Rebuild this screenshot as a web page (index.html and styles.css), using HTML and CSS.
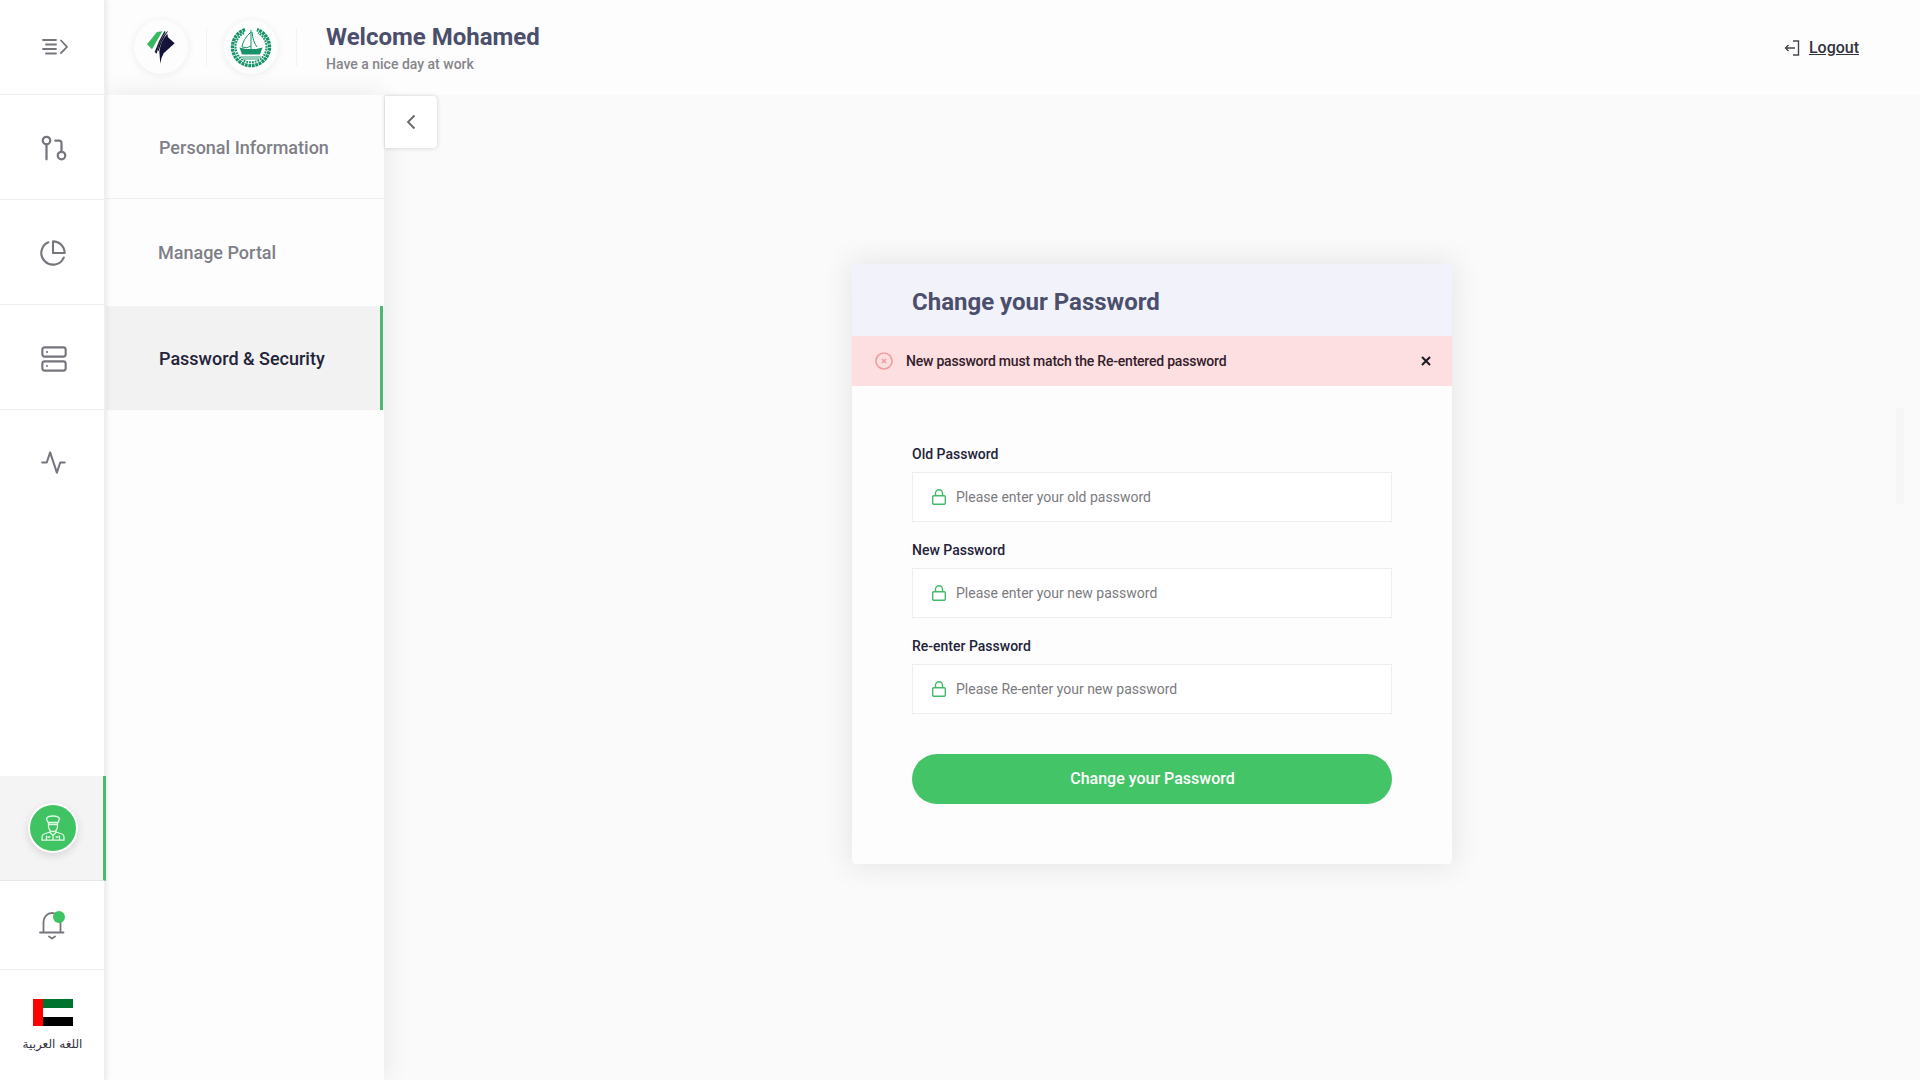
FILE: index.html
```html
<!DOCTYPE html>
<html lang="en">
<head>
<meta charset="utf-8">
<title>Password &amp; Security</title>
<link rel="stylesheet" href="styles.css">
</head>
<body>
<div class="app">
  <nav class="rail">
    <a class="rail-toggle">
      <svg width="28" height="20" viewBox="0 0 28 20"><path d="M1 3h13M4 7.500h10M1 12h13M4 16.500h10M19 3.500l6 6.300-6 6.200"/></svg>
    </a>
    <a class="rail-item">
      <svg width="30" height="30" viewBox="0 0 24 24"><circle cx="18" cy="18" r="3"/><circle cx="6" cy="6" r="3"/><path d="M13 6h3a2 2 0 0 1 2 2v7M6 9v12"/></svg>
    </a>
    <a class="rail-item rail-chart">
      <svg width="28" height="28" viewBox="0 0 24 24"><path d="M21.200 15.900A10 10 0 1 1 8 2.800"/><path d="M22 12A10 10 0 0 0 12 2v10z"/></svg>
    </a>
    <a class="rail-item">
      <svg width="28" height="28" viewBox="0 0 24 24"><rect x="2" y="2" width="20" height="8" rx="2"/><rect x="2" y="14" width="20" height="8" rx="2"/><path d="M6 6h.01M6 18h.01"/></svg>
    </a>
    <a class="rail-item rail-last">
      <svg width="27" height="27" viewBox="0 0 24 24"><path d="M22 12h-4l-3 9L9 3l-3 9H2"/></svg>
    </a>
    <div class="rail-space"></div>
    <a class="rail-item rail-active">
      <span class="avatar">
        <svg width="24" height="26" viewBox="0 0 24 26"><path d="M5.500 4Q6 1 12 1t6.500 3L17 7.500H7zM7.500 7.500v4q.5 5 4.500 5t4.500-5v-4M7.500 9.500h9M9 15.500v2l3 3 3-3v-2M9 17l-6 2q-2 .8-2 3v3.200h22V22q0-2.200-2-3l-6-2M12 20.500v4.500M5.500 21v4M18.500 21v4M15 22h2M7 22h2"/></svg>
      </span>
    </a>
    <a class="rail-bell">
      <svg width="28" height="30" viewBox="0 0 28 30"><path d="M2 22.500h23.500M5.500 22V12a8.500 9 0 0 1 17 0v10M11 26.500l3 2 3-2"/><circle class="bell-dot" cx="21" cy="7" r="6"/></svg>
    </a>
    <a class="rail-lang">
      <svg width="40" height="27" viewBox="0 0 40 27"><path fill="#fff" d="M0 0h40v27H0z"/><path fill="#00732f" d="M10 0h30v9H10z"/><path fill="#000" d="M10 18h30v9H10z"/><path fill="#f00" d="M0 0h10v27H0z"/></svg>
      <span lang="ar" dir="rtl">اللغه العربية</span>
    </a>
  </nav>

  <div class="body">
    <header class="topbar">
      <span class="logo">
        <svg width="28" height="34" viewBox="67 47 84 102"><path fill="#35b95c" d="M97 53l16-2-31 54-15-15z"/><path fill="#1b1b3a" d="M119 51q-17 28-29 62l6 5q8-36 27-66z"/><path fill="#14143a" d="M128 50q-21 22-29 58l3 3q8-32 27-59z"/><path fill="#14143a" d="M128 58q-20 22-24 54l3 36q2-18 10-31l33-30-20-18z"/></svg>
      </span>
      <i class="divider"></i>
      <span class="logo">
        <svg width="42" height="42" viewBox="0 0 42 42" fill="none" stroke="#16936a"><path stroke-width="3.400" stroke-dasharray="2.800 .7" d="M15 3.600A18.500 18.500 0 1 0 27 3.600"/><path stroke-width="2" stroke-dasharray="1.800 1" d="M14 7A15.500 15.500 0 1 0 28 7"/><path stroke-width="1" d="M21 4v19M21 6q-8 7-9 15 5 2 9-1M22 6q1 10 5 15"/><path fill="#16936a" stroke="none" d="M9.500 21.500l6.500 1.500h10l6.500-1.500L30 28.500H12z"/><path stroke-width=".9" d="M11 31h20M13 33h16"/></svg>
      </span>
      <i class="divider"></i>
      <div class="greeting">
        <h1>Welcome Mohamed</h1>
        <p>Have a nice day at work</p>
      </div>
      <a class="logout">
        <svg width="16" height="18" viewBox="0 0 16 18"><path d="M9 2h5.500v14H9M11 9H1.500M4.500 6l-3 3 3 3"/></svg>
        <span>Logout</span>
      </a>
    </header>

    <div class="content">
      <aside class="subnav">
        <a class="sub-item">Personal Information</a>
        <a class="sub-item sub-second">Manage Portal</a>
        <a class="sub-item sub-active">Password &amp; Security</a>
      </aside>
      <main class="stage">
        <button class="collapse"><svg width="12" height="16" viewBox="0 0 12 16"><path d="M9.500 1.500L3 8l6.500 6.500"/></svg></button>
        <form class="card">
          <h2 class="card-head">Change your Password</h2>
          <div class="alert">
            <svg class="alert-icon" width="18" height="18" viewBox="0 0 18 18"><circle cx="9" cy="9" r="8"/><path d="M7 7l4 4M11 7l-4 4"/></svg>
            <span class="alert-text">New password must match the Re-entered password</span>
            <svg class="alert-close" width="10" height="10" viewBox="0 0 10 10"><path d="M1 1l8 8M9 1L1 9"/></svg>
          </div>
          <div class="fields">
            <label class="field">Old Password
              <span class="input"><svg width="14" height="16" viewBox="0 0 14 16"><rect x=".7" y="6.700" width="12.600" height="8.600" rx="1"/><path d="M3.500 6.700V4.200a3.500 3.500 0 0 1 7 0v2.500"/></svg>Please enter your old password</span></label>
            <label class="field">New Password
              <span class="input"><svg width="14" height="16" viewBox="0 0 14 16"><rect x=".7" y="6.700" width="12.600" height="8.600" rx="1"/><path d="M3.500 6.700V4.200a3.500 3.500 0 0 1 7 0v2.500"/></svg>Please enter your new password</span></label>
            <label class="field">Re-enter Password
              <span class="input"><svg width="14" height="16" viewBox="0 0 14 16"><rect x=".7" y="6.700" width="12.600" height="8.600" rx="1"/><path d="M3.500 6.700V4.200a3.500 3.500 0 0 1 7 0v2.500"/></svg>Please Re-enter your new password</span></label>
            <button class="submit" type="button">Change your Password</button>
          </div>
        </form>
        <i class="scroll-thumb"></i>
      </main>
    </div>
  </div>
</div>
</body>
</html>
```
FILE: styles.css
```css
* { box-sizing: border-box; }
body { margin: 0; background: #fafafa; color: #23233a; font-family: Roboto, "Liberation Sans", sans-serif; font-size: 14px; }
h1, h2, p { margin: 0; }
svg { display: block; flex: none; }
button { font: inherit; border: 0; padding: 0; }

.app { display: flex; width: 1920px; height: 1080px; overflow: hidden; }

.rail { position: relative; z-index: 3; flex: none; width: 106px; display: flex; flex-direction: column; background: #fff; border-right: 2px solid #efefef; box-shadow: 0 0 6px rgba(0, 0, 0, .1); }
.rail svg { fill: none; stroke: #75757d; stroke-width: 1.800; stroke-linecap: round; stroke-linejoin: round; }
.rail-toggle { height: 95px; display: flex; align-items: center; justify-content: center; padding: 0 0 0 8px; border-bottom: 1px solid #f1f1f1; }
.rail-item { height: 105px; display: flex; align-items: center; justify-content: center; padding: 1px 0 0 3px; border-bottom: 1px solid #efefef; }
.rail-item + .rail-item { padding-top: 3px; }
.rail-item.rail-chart { padding: 2px 0 0 1px; }
.rail-item.rail-last { height: 103px; padding-top: 1px; border: 0; }
.rail-space { flex: 1; }
.rail-item.rail-active { height: 105px; margin-right: -2px; padding: 0 0 0 2px; background: #f4f4f4; border-right: 3px solid #4cb873; border-bottom: 1px solid #e8e8e8; }
.avatar { width: 50px; height: 50px; display: flex; align-items: center; justify-content: center; border: 2px solid #fff; border-radius: 50%; background: #40c463; box-shadow: 0 3px 8px rgba(0, 0, 0, .12); }
.rail-active svg { stroke: #dff7e5; stroke-width: 1.300; }
.rail-bell { height: 89px; display: flex; align-items: center; justify-content: center; border-bottom: 1px solid #efefef; }
.rail .bell-dot { fill: #40c463; stroke: none; }
.rail-lang { height: 110px; padding: 29px 0 0 1px; display: flex; flex-direction: column; align-items: center; gap: 9px; color: #33333f; font: 12px/18px "DejaVu Sans", sans-serif; }
.rail-lang svg { stroke: none; }

.body { flex: 1; display: flex; flex-direction: column; }
.topbar { flex: none; height: 95px; display: flex; align-items: center; padding: 0 61px 1px 28px; background: #fdfdfd; }
.logo { width: 54px; height: 54px; display: flex; align-items: center; justify-content: center; border-radius: 50%; background: #fdfdfd; box-shadow: 0 1px 8px rgba(0, 0, 0, .07); }
.divider { width: 1px; height: 38px; margin: 0 17px 0 18px; background: #f3f3f3; }
.greeting { margin-left: 12px; }
.greeting h1 { padding-top: 1px; font-size: 24px; line-height: 30px; font-weight: 700; color: #4b4f6b; }
.greeting p { font-size: 14px; line-height: 18px; margin-top: 3px; font-weight: 500; color: #85858a; }
.logout { margin: 1px 0 0 auto; display: flex; align-items: center; gap: 9px; font-size: 16px; font-weight: 500; color: #33333f; text-decoration: underline; }
.logout svg { fill: none; stroke: #44444c; stroke-width: 1.400; }

.content { flex: 1; display: flex; }
.subnav { position: relative; z-index: 1; flex: none; width: 278px; background: #fdfdfd; box-shadow: 0 0 26px rgba(0, 0, 0, .09); }
.sub-item { height: 104px; display: flex; align-items: center; padding: 2px 0 0 53px; font-size: 18px; font-weight: 500; color: #7f7f88; border-bottom: 1px solid #f0f0f0; }
.sub-second { height: 107px; padding: 0 0 0 52px; border: 0; }
.sub-active { height: 104px; margin-right: 1px; padding-top: 0; background: #f2f2f2; border: 0; border-right: 3px solid #4cb873; color: #23233a; }

.stage { position: relative; flex: 1; display: flex; justify-content: center; align-items: flex-start; padding-top: 169px; }
.collapse { position: absolute; z-index: 2; left: 1px; top: 1px; width: 52px; height: 52px; display: flex; align-items: center; justify-content: center; background: #fff; border-radius: 0 4px 4px 0; box-shadow: 0 0 4px rgba(0, 0, 0, .17); }
.collapse svg { fill: none; stroke: #66666c; stroke-width: 1.800; }
.scroll-thumb { position: absolute; right: 16px; top: 313px; width: 8px; height: 96px; background: #f6f6f6; }

.card { width: 600px; height: 600px; background: #fdfdfd; box-shadow: 0 0 28px 4px rgba(0, 0, 0, .08); border-radius: 4px; }
.card-head { height: 72px; padding: 3px 60px 0; display: flex; align-items: center; background: #f2f2fa; font-size: 24px; font-weight: 700; color: #4b4f6b; }
.alert { height: 50px; display: flex; align-items: center; padding: 0 21px 0 23px; background: #fedfe1; font-weight: 500; color: #33202b; }
.alert svg { fill: none; stroke: #ee9fa3; stroke-width: 1.700; }
.alert-icon { margin-right: 13px; }
.alert-text { letter-spacing: -.215px; }
.alert .alert-close { margin-left: auto; stroke: #1c1a22; stroke-width: 2; }
.fields { padding: 56px 60px 0; }
.field { height: 96px; display: block; font-weight: 500; line-height: 24px; }
.input { height: 50px; margin-top: 6px; display: flex; align-items: center; gap: 10px; padding: 0 19px; background: #fff; border: 1px solid #eeeef0; color: #7b7b80; font-weight: 400; }
.input svg { fill: none; stroke: #43b96a; stroke-width: 1.400; }
.submit { width: 480px; height: 50px; margin-top: 24px; padding: 0 0 1px 1px; border-radius: 25px; background: #43c466; color: #fff; font-size: 16px; font-weight: 500; }
```
